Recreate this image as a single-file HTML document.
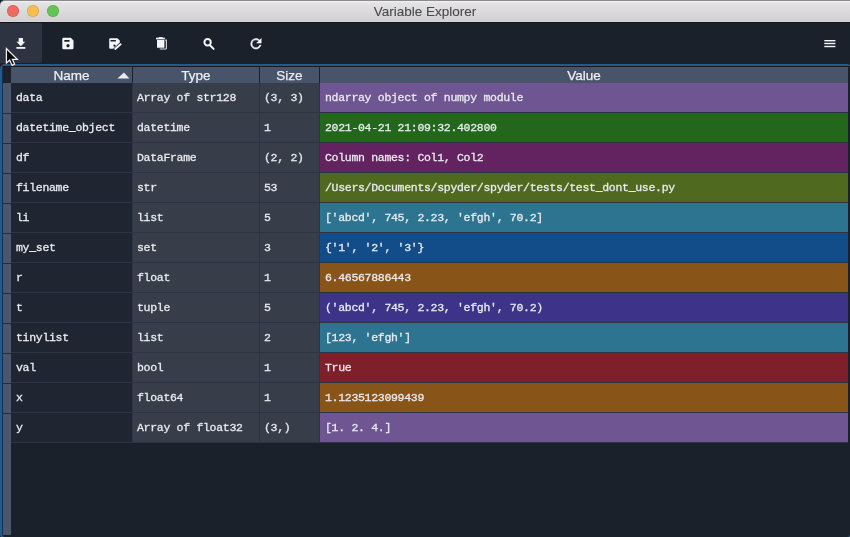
<!DOCTYPE html>
<html><head><meta charset="utf-8">
<style>
*{margin:0;padding:0;box-sizing:border-box}
html,body{width:850px;height:537px;overflow:hidden;background:#1b212b}
body{position:relative;font-family:"Liberation Sans",sans-serif}
.abs{position:absolute}
#title{left:0;top:0;width:850px;height:23px;background:linear-gradient(#f2f1f3 0px,#e3e2e4 2px,#d2d0d2 20px,#dcdadc 21px);border-top:1px solid #8c8b8d;border-bottom:1px solid #11161e;border-radius:5px 0 0 0}
#title .t{position:absolute;left:0;width:850px;top:3px;text-align:center;font-size:13.5px;color:#4a494c;will-change:transform;-webkit-text-stroke:0.1px #4a494c}
.tl{position:absolute;top:4px;width:12px;height:12px;border-radius:50%;box-shadow:inset 0 0 0 0.6px rgba(120,60,30,0.25)}
.hov{left:0;top:23px;width:42px;height:40px;background:#2d3341;border-radius:0 2px 3px 0}
#box{left:0;top:64px;width:852px;height:475px;border:2px solid #215b8e;border-radius:5px;background:#1b212b;box-shadow:inset 0.6px 0.6px 0 #123a6e}
.vh{left:3px;width:8px;background:#4a566b}
.vsep{left:3px;width:8px;height:1px;background:#262c37}
.hd{top:67px;height:16px;background:#48546a;color:#eceef2;font-size:13.5px;text-align:center;line-height:16px;padding-top:1px;will-change:transform;-webkit-text-stroke:0.25px #eceef2}
.row{left:11px;width:837px;height:30px;background:#2b3443}
.c{position:absolute;-webkit-text-stroke:0.3px #e8eaee;will-change:transform;top:0;height:29px;font-family:"Liberation Mono",monospace;font-size:11.5px;letter-spacing:-0.3px;color:#e8eaee;line-height:29px;white-space:pre;padding-top:0px}
.cn{left:0;width:121px;background:#1f2631;padding-left:5px}
.ct{left:122px;width:126px;background:#373e49;padding-left:4px}
.cs{left:249px;width:59px;background:#373e49;padding-left:4px}
.cv{left:309px;width:528px;padding-left:5px}

</style></head><body>
<div id="title" class="abs"><div class="t">Variable Explorer</div>
<div class="tl" style="left:7px;background:#ee6a5f"></div>
<div class="tl" style="left:27px;background:#f5bf4f"></div>
<div class="tl" style="left:47px;background:#61c454"></div>
</div>
<div class="hov abs"></div>
<div id="box" class="abs"></div>
<svg class="abs" style="left:0;top:0" width="850" height="70" viewBox="0 0 850 70">
<g fill="#f4f5f7">
<path d="M18.7,37.9H23V41.8H25.2L20.85,46.2L16.5,41.8H18.7Z"/>
<rect x="16.4" y="47" width="8.9" height="1.8"/>
<path fill-rule="evenodd" d="M63.6,37.8H70.8L73.5,40.5V47.9Q73.5,49.2 72.2,49.2H63.6Q62.3,49.2 62.3,47.9V39.1Q62.3,37.8 63.6,37.8ZM64.3,39.9V41.7H69.5V39.9ZM68,44.1A1.6,1.6 0 1,0 68,47.3A1.6,1.6 0 1,0 68,44.1Z"/>
<path fill-rule="evenodd" d="M110.2,38.2H117.4L119.8,40.6V42.6L113.2,48.8H110.2Q109.2,48.8 109.2,47.8V39.2Q109.2,38.2 110.2,38.2ZM110.5,40V41.5H115.9V40Z"/>
<circle cx="114.5" cy="45.7" r="1.15" fill="#1b212b"/>
<path d="M115.2,49L120.6,44.3" stroke="#f4f5f7" stroke-width="1.9" stroke-linecap="round"/>
<path d="M158.7,37.1H162.7V38H158.7Z"/>
<path d="M156,37.7H164.9V39.4H156Z"/>
<path d="M157,40H164.4V47.2Q164.4,47.8 163.8,47.8H157.6Q157,47.8 157,47.2Z"/>
<path d="M165.3,39.4H167V41H165.3Z" opacity="0.8"/>
<path d="M165.8,41H166.9V48.2Q166.9,49.4 165.7,49.4H159.7V48.4H165.8Z" opacity="0.9"/>
<circle cx="207.6" cy="42.2" r="3.2" fill="none" stroke="#f4f5f7" stroke-width="2"/>
<path d="M210.2,45.5L213.6,48.9" stroke="#f4f5f7" stroke-width="2" stroke-linecap="round"/>
<path transform="translate(248.1,35.9) scale(0.656)" stroke="#f4f5f7" stroke-width="0.8" d="M17.65,6.35C16.2,4.9 14.21,4 12,4A8,8 0 0,0 4,12A8,8 0 0,0 12,20C15.73,20 18.84,17.45 19.73,14H17.65C16.83,16.33 14.61,18 12,18A6,6 0 0,1 6,12A6,6 0 0,1 12,6C13.66,6 15.14,6.69 16.22,7.78L13,11H20V4L17.65,6.35Z"/>
<rect x="824.3" y="40" width="11.1" height="1.4"/>
<rect x="824.3" y="42.8" width="11.1" height="1.4"/>
<rect x="824.3" y="45.8" width="11.1" height="1.4"/>
</g>
</svg>
<svg class="abs" style="left:0;top:0" width="30" height="70" viewBox="0 0 30 70">
<path d="M6.4,48.6V63L9.7,60L12.1,65.4L14.6,64.3L12.4,59.3H17.3Z" fill="#0a0a0c" stroke="#f2f2f2" stroke-width="1.25" stroke-linejoin="miter"/>
</svg>
<div class="abs" style="left:2px;top:66px;width:848px;height:1px;background:#151a22"></div>
<div class="abs hd" style="left:3px;width:8px;background:#1c222c"></div>
<div class="abs hd" style="left:11px;width:121px">Name</div>
<svg class="abs" style="left:115px;top:71px" width="16" height="9" viewBox="0 0 16 9"><path d="M2.4,7.6L9,1.6L14.4,7.6Z" fill="#e9ebef"/></svg>
<div class="abs hd" style="left:133px;width:126px">Type</div>
<div class="abs hd" style="left:260px;width:59px">Size</div>
<div class="abs hd" style="left:320px;width:528px">Value</div>
<div class="abs vh" style="top:83px;height:452px"></div>
<div class="abs vsep" style="top:113px"></div><div class="abs row" style="top:83px"><div class="c cn">data</div><div class="c ct">Array of str128</div><div class="c cs">(3, 3)</div><div class="c cv" style="background:#6f5592">ndarray object of numpy module</div></div>
<div class="abs vsep" style="top:143px"></div><div class="abs row" style="top:113px"><div class="c cn">datetime_object</div><div class="c ct">datetime</div><div class="c cs">1</div><div class="c cv" style="background:#22671b">2021-04-21 21:09:32.402800</div></div>
<div class="abs vsep" style="top:173px"></div><div class="abs row" style="top:143px"><div class="c cn">df</div><div class="c ct">DataFrame</div><div class="c cs">(2, 2)</div><div class="c cv" style="background:#632260">Column names: Col1, Col2</div></div>
<div class="abs vsep" style="top:203px"></div><div class="abs row" style="top:173px"><div class="c cn">filename</div><div class="c ct">str</div><div class="c cs">53</div><div class="c cv" style="background:#4f6a1f">/Users/Documents/spyder/spyder/tests/test_dont_use.py</div></div>
<div class="abs vsep" style="top:233px"></div><div class="abs row" style="top:203px"><div class="c cn">li</div><div class="c ct">list</div><div class="c cs">5</div><div class="c cv" style="background:#2d7490">['abcd', 745, 2.23, 'efgh', 70.2]</div></div>
<div class="abs vsep" style="top:263px"></div><div class="abs row" style="top:233px"><div class="c cn">my_set</div><div class="c ct">set</div><div class="c cs">3</div><div class="c cv" style="background:#134d89">{'1', '2', '3'}</div></div>
<div class="abs vsep" style="top:293px"></div><div class="abs row" style="top:263px"><div class="c cn">r</div><div class="c ct">float</div><div class="c cs">1</div><div class="c cv" style="background:#885417">6.46567886443</div></div>
<div class="abs vsep" style="top:323px"></div><div class="abs row" style="top:293px"><div class="c cn">t</div><div class="c ct">tuple</div><div class="c cs">5</div><div class="c cv" style="background:#3d3489">('abcd', 745, 2.23, 'efgh', 70.2)</div></div>
<div class="abs vsep" style="top:353px"></div><div class="abs row" style="top:323px"><div class="c cn">tinylist</div><div class="c ct">list</div><div class="c cs">2</div><div class="c cv" style="background:#2d7490">[123, 'efgh']</div></div>
<div class="abs vsep" style="top:383px"></div><div class="abs row" style="top:353px"><div class="c cn">val</div><div class="c ct">bool</div><div class="c cs">1</div><div class="c cv" style="background:#7e1f29">True</div></div>
<div class="abs vsep" style="top:413px"></div><div class="abs row" style="top:383px"><div class="c cn">x</div><div class="c ct">float64</div><div class="c cs">1</div><div class="c cv" style="background:#885417">1.1235123099439</div></div>
<div class="abs row" style="top:413px"><div class="c cn">y</div><div class="c ct">Array of float32</div><div class="c cs">(3,)</div><div class="c cv" style="background:#6f5592">[1. 2. 4.]</div></div>
</body></html>
